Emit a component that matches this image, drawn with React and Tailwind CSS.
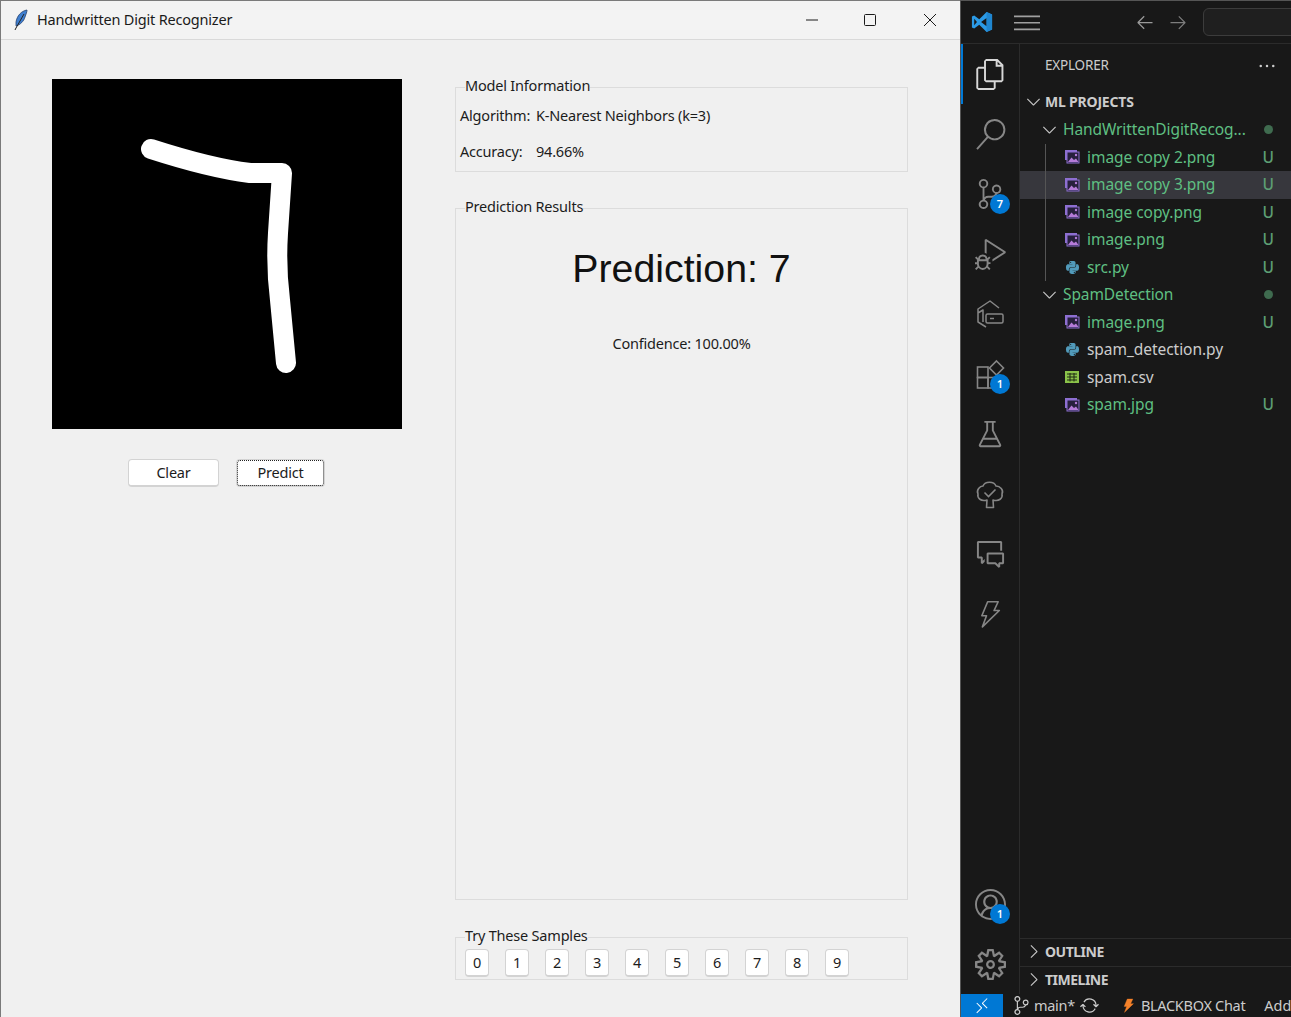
import {
  VscFiles,
  VscSearch,
  VscSourceControl,
  VscDebugAlt,
  VscBeaker,
  VscCommentDiscussion,
  VscAccount,
  VscSettingsGear,
  VscChevronDown,
  VscChevronRight,
  VscEllipsis,
  VscMenu,
  VscArrowLeft,
  VscArrowRight,
  VscRemote,
  VscSourceControl as VscBranch,
  VscSync,
} from "react-icons/vsc";
import { FaPython } from "react-icons/fa";

const uiFont = "font-['Noto_Sans','Open_Sans',sans-serif]";

function GroupBox({ title, className = "", children }) {
  return (
    <fieldset className={`border border-[#dcdcdc] min-w-0 ${className}`}>
      <legend className="ml-[9px] h-5 text-[14.5px] leading-5 text-[#1c1c1c] tracking-[-0.2px]">
        <span className="block -translate-y-[2px]">{title}</span>
      </legend>
      {children}
    </fieldset>
  );
}

function TkButton({ focused, className = "", children }) {
  return (
    <button
      className={`bg-white rounded-[4px] border border-[#d3d3d3] border-b-2 text-[#1c1c1c] text-[14.5px] tracking-[-0.2px] ${
        focused ? "outline-1 outline-dotted outline-[#222] -outline-offset-2" : ""
      } ${className}`}
    >
      {children}
    </button>
  );
}

function Feather() {
  return (
    <svg width="16" height="22" viewBox="0 0 16 22">
      <path d="M14 1 C8 2 4 7 3 13 L3 17 C7 16 11 12 12 8 C13 5 14 3 14 1Z" fill="#3f7fd0" stroke="#24406e" strokeWidth="0.8" />
      <path d="M11 5 L3 19 L2 21" fill="none" stroke="#222" strokeWidth="1" />
    </svg>
  );
}

function TkWindow() {
  const digits = ["0", "1", "2", "3", "4", "5", "6", "7", "8", "9"];
  return (
    <div className={`w-[960px] h-full flex flex-col bg-[#f0f0f0] border-l border-t border-[#7a7a7a] ${uiFont}`}>
      {/* title bar */}
      <div className="h-[39px] shrink-0 flex items-center bg-[#f3f3f3] border-b border-[#d9d9d9] pl-3">
        <Feather />
        <span className="ml-[8px] text-[14.5px] text-[#1a1a1a] tracking-[-0.2px]">Handwritten Digit Recognizer</span>
        <div className="ml-auto flex h-full">
          <div className="w-[58px] flex items-center justify-center">
            <svg width="14" height="14" viewBox="0 0 14 14"><path d="M1 7h12" stroke="#1a1a1a" strokeWidth="1" /></svg>
          </div>
          <div className="w-[58px] flex items-center justify-center">
            <svg width="14" height="14" viewBox="0 0 14 14"><rect x="1.5" y="1.5" width="11" height="11" rx="1" fill="none" stroke="#1a1a1a" strokeWidth="1" /></svg>
          </div>
          <div className="w-[61px] flex items-center justify-center">
            <svg width="14" height="14" viewBox="0 0 14 14"><path d="M1 1l12 12M13 1L1 13" stroke="#1a1a1a" strokeWidth="1" /></svg>
          </div>
        </div>
      </div>

      <div className="flex-1 flex min-h-0">
        {/* canvas column */}
        <div className="w-[454px] shrink-0 pl-[51px] pt-[39px]">
          <div className="w-[350px] h-[350px] bg-black">
            <svg width="350" height="350" viewBox="0 0 350 350">
              <path
                d="M99 70 C130 80 165 90 198 94 L230 94 L226 154 C224 185 226 205 228 221 L234 284"
                fill="none"
                stroke="#fff"
                strokeWidth="20"
                strokeLinecap="round"
                strokeLinejoin="round"
              />
            </svg>
          </div>
          <div className="mt-[30px] w-[350px] pr-px flex justify-center gap-[17px]">
            <TkButton className="w-[91px] h-[28px]">Clear</TkButton>
            <TkButton focused className="w-[89px] h-[28px]">Predict</TkButton>
          </div>
        </div>

        {/* info column */}
        <div className="w-[453px] shrink-0 flex flex-col pt-[37px] pb-[37px]">
          <GroupBox title="Model Information">
            <div className="grid grid-cols-[76px_1fr] auto-rows-[36px] items-center pl-1 pt-px pb-px text-[14.5px] text-[#1c1c1c] tracking-[-0.2px]">
              <span>Algorithm:</span>
              <span>K-Nearest Neighbors (k=3)</span>
              <span>Accuracy:</span>
              <span>94.66%</span>
            </div>
          </GroupBox>

          <GroupBox title="Prediction Results" className="flex-1 mt-[26px]">
            <div className="text-center">
              <h1 className="mt-[26px] font-['Liberation_Sans',Arial,sans-serif] text-[39.3px] leading-[48px] text-[#111]">Prediction: 7</h1>
              <p className="mt-[41px] text-[14.5px] leading-5 text-[#1c1c1c] tracking-[-0.2px]">Confidence: 100.00%</p>
            </div>
          </GroupBox>

          <GroupBox title="Try These Samples" className="mt-[27px]">
            <div className="flex gap-4 pl-[9px] pt-[2px] pb-[2px]">
              {digits.map((d) => (
                <TkButton key={d} className="w-6 h-7">{d}</TkButton>
              ))}
            </div>
          </GroupBox>
        </div>
      </div>
    </div>
  );
}

function VscodeLogo() {
  return (
    <svg width="22" height="22" viewBox="0 0 24 24" className="shrink-0">
      <path d="M17 1 L9 9 L3.5 4.8 L1 6 V18 L3.5 19.2 L9 15 L17 23 L23 20.2 V3.8Z M17 7.5 V16.5 L11 12Z M3.5 8.5 L6.5 12 L3.5 15.5Z" fill="#2b9ae6" fillRule="evenodd" />
      <path d="M17 1 L23 3.8 V20.2 L17 23 V16.5 V7.5Z" fill="#1f86d0" />
    </svg>
  );
}

function ImageIcon() {
  return (
    <svg width="16" height="16" viewBox="0 0 16 16">
      <path d="M1 1h12v2H3v8H1z" fill="#8d6fd1" />
      <rect x="3" y="3" width="12" height="11" fill="#27203d" stroke="#8d6fd1" strokeWidth="1" />
      <path d="M4 13l3.5-4.5 2.5 2.5 2-1.5 2.5 3.5z" fill="#b57bd8" />
      <circle cx="12" cy="6" r="1.2" fill="#b57bd8" />
    </svg>
  );
}

function CsvIcon() {
  return (
    <svg width="16" height="16" viewBox="0 0 16 16">
      <rect x="1" y="2" width="14" height="12" fill="#8bc34a" />
      <path d="M3 5h10M3 8h10M3 11h10M6 4v8.5M10 4v8.5" stroke="#1e2b12" strokeWidth="1" />
    </svg>
  );
}

function RemoteIcon({ size }) {
  return (
    <svg width={size} height={size} viewBox="0 0 30 30" fill="none" stroke="#868686" strokeWidth="1.5">
      <path d="M11 28 L3 23 V10 L15 2 L24 9 M3 14 L8 11 V23" strokeLinejoin="round" />
      <rect x="11" y="15" width="17" height="9" rx="1.5" />
      <path d="M15 19.5h4" />
    </svg>
  );
}

function ExtensionsIcon({ size }) {
  return (
    <svg width={size} height={size} viewBox="0 0 30 30" fill="none" stroke="#868686" strokeWidth="1.6">
      <rect x="2.5" y="8" width="10.5" height="10.5" />
      <rect x="2.5" y="18.5" width="10.5" height="10.5" />
      <rect x="13" y="18.5" width="10.5" height="10.5" />
      <path d="M21.5 2 L28.5 9 L21.5 16 L14.5 9Z" />
    </svg>
  );
}

function TreeCheckIcon({ size }) {
  return (
    <svg width={size} height={size} viewBox="0 0 30 30" fill="none" stroke="#868686" strokeWidth="1.6">
      <path d="M12 21 C6 23 2 19 3 15 C1 11 5 7 8 7 C10 2 19 2 21 7 C25 7 29 11 27 15 C28 19 24 23 18 21 L18.5 28.5 H11.5 Z" strokeLinejoin="round" />
      <path d="M9.5 13.5 L13.5 17.5 L20.5 10.5" />
    </svg>
  );
}

function BoltIcon({ size, className = "", color = "#868686", filled, strokeWidth = 1.4 }) {
  return (
    <svg width={size} height={size} viewBox="0 0 24 24" className={`shrink-0 ${className}`} fill={filled ? color : "none"} stroke={color} strokeWidth={strokeWidth}>
      <path d="M10 1.5 H19 L15.5 9 H20 L5.5 23 L9 13.5 H5 Z" strokeLinejoin="round" />
    </svg>
  );
}

function Badge({ n }) {
  return (
    <span className="absolute right-[9px] bottom-[10px] w-5 h-5 rounded-full bg-[#0078d4] text-white text-[11px] font-semibold flex items-center justify-center">
      {n}
    </span>
  );
}

function ActivityItem({ children, badge, active }) {
  return (
    <div className={`relative h-[60px] flex items-center justify-center ${active ? "border-l-2 border-[#0078d4] pr-[2px]" : ""}`}>
      {children}
      {badge && <Badge n={badge} />}
    </div>
  );
}

const files = [
  { name: "HandWrittenDigitRecog...", folder: true, status: "dot" },
  { name: "image copy 2.png", icon: "img", status: "U" },
  { name: "image copy 3.png", icon: "img", status: "U", selected: true },
  { name: "image copy.png", icon: "img", status: "U" },
  { name: "image.png", icon: "img", status: "U" },
  { name: "src.py", icon: "py", status: "U" },
  { name: "SpamDetection", folder: true, status: "dot" },
  { name: "image.png", icon: "img", status: "U" },
  { name: "spam_detection.py", icon: "py", plain: true },
  { name: "spam.csv", icon: "csv", plain: true },
  { name: "spam.jpg", icon: "img", status: "U" },
];

function FileRow({ file, guide }) {
  const color = file.plain ? "text-[#cccccc]" : "text-[#5fbf82]";
  return (
    <div className={`relative h-[27.5px] flex items-center ${file.selected ? "bg-[#37373d]" : ""}`}>
      {guide && <span className="absolute left-[25px] top-0 bottom-0 w-px bg-[#555]" />}
      {file.folder ? (
        <>
          <VscChevronDown size={21} color="#c5c5c5" className="ml-[19px] shrink-0" />
          <span className={`ml-[3px] tracking-[-0.1px] ${color}`}>{file.name}</span>
        </>
      ) : (
        <>
          <span className="ml-[44px] w-4 shrink-0 flex items-center justify-center">
            {file.icon === "img" && <ImageIcon />}
            {file.icon === "py" && <FaPython size={15} color="#519aba" />}
            {file.icon === "csv" && <CsvIcon />}
          </span>
          <span className={`ml-[7px] tracking-[-0.05px] ${color}`}>{file.name}</span>
        </>
      )}
      {file.status === "U" && <span className="ml-auto mr-[17px] text-[#5d9e74] text-[15.5px] font-medium">U</span>}
      {file.status === "dot" && <span className="ml-auto mr-[18px] w-[9px] h-[9px] rounded-full bg-[#3f6b4f]" />}
    </div>
  );
}

function CollapsedSection({ title }) {
  return (
    <div className="h-[28px] flex items-center border-t border-[#2b2b2b] pb-[2px]">
      <VscChevronRight size={21} color="#c5c5c5" className="ml-[3px] shrink-0" />
      <span className="ml-px text-[14px] font-bold text-[#cccccc] tracking-[-0.5px]">{title}</span>
    </div>
  );
}

function VsCode() {
  return (
    <div className={`w-[331px] h-full flex flex-col bg-[#181818] border-l border-[#555] overflow-hidden ${uiFont}`}>
      {/* title bar */}
      <div className="h-[44px] shrink-0 flex items-center border-b border-[#2b2b2b] border-t border-t-[#555]">
        <div className="ml-[10px] shrink-0"><VscodeLogo /></div>
        <VscMenu size={26} color="#a0a0a0" className="ml-[21px] shrink-0" />
        <VscArrowLeft size={20} color="#9a9a9a" className="ml-[95px] shrink-0" />
        <VscArrowRight size={20} color="#7d7d7d" className="ml-[13px] shrink-0" />
        <div className="ml-[15px] w-[120px] h-[28px] shrink-0 rounded-md border border-[#3c3c3c] bg-[#1f1f1f]" />
      </div>

      <div className="flex-1 flex min-h-0">
        {/* activity bar */}
        <div className="w-[59px] shrink-0 flex flex-col border-r border-[#2b2b2b]">
          <ActivityItem active><VscFiles size={31} color="#d7d7d7" /></ActivityItem>
          <ActivityItem><VscSearch size={31} color="#868686" /></ActivityItem>
          <ActivityItem badge="7"><VscSourceControl size={30} color="#868686" /></ActivityItem>
          <ActivityItem><VscDebugAlt size={31} color="#868686" /></ActivityItem>
          <ActivityItem><RemoteIcon size={30} /></ActivityItem>
          <ActivityItem badge="1"><ExtensionsIcon size={30} /></ActivityItem>
          <ActivityItem><VscBeaker size={30} color="#868686" /></ActivityItem>
          <ActivityItem><TreeCheckIcon size={30} /></ActivityItem>
          <ActivityItem><VscCommentDiscussion size={31} color="#868686" /></ActivityItem>
          <ActivityItem><BoltIcon size={28} /></ActivityItem>
          <div className="mt-auto">
            <ActivityItem badge="1"><VscAccount size={31} color="#868686" /></ActivityItem>
            <ActivityItem><VscSettingsGear size={31} color="#868686" /></ActivityItem>
          </div>
        </div>

        {/* explorer */}
        <div className="flex-1 min-w-0 flex flex-col text-[15.5px]">
          <div className="h-[43px] shrink-0 flex items-center pl-[25px] pr-[14px] text-[13.5px] text-[#cccccc] tracking-[-0.2px]">
            EXPLORER
            <VscEllipsis size={20} color="#cccccc" className="ml-auto" />
          </div>
          <div className="h-[28px] shrink-0 flex items-center">
            <VscChevronDown size={21} color="#c5c5c5" className="ml-[3px] shrink-0" />
            <span className="ml-px text-[14px] font-bold text-[#cccccc] tracking-[-0.2px]">ML PROJECTS</span>
          </div>
          <div className="pt-px">
            {files.map((file, i) => (
              <FileRow key={i} file={file} guide={i >= 1 && i <= 5} />
            ))}
          </div>
          <div className="mt-auto">
            <CollapsedSection title="OUTLINE" />
            <CollapsedSection title="TIMELINE" />
          </div>
        </div>
      </div>

      {/* status bar */}
      <div className="h-[23px] shrink-0 flex items-center text-[14.5px] text-[#cccccc] whitespace-nowrap">
        <div className="w-[42px] h-full shrink-0 bg-[#0078d4] flex items-center justify-center">
          <VscRemote size={18} color="#fff" />
        </div>
        <VscBranch size={19} color="#cccccc" className="ml-[9px] shrink-0" />
        <span className="ml-[3px] tracking-[-0.3px]">main*</span>
        <VscSync size={19} color="#cccccc" className="ml-[5px] shrink-0" />
        <BoltIcon size={15} color="#f5822a" filled strokeWidth={0.5} className="ml-[22px]" />
        <span className="ml-[5px] tracking-[-0.3px]">BLACKBOX Chat</span>
        <span className="ml-[19px]">Add</span>
      </div>
    </div>
  );
}

export default function App() {
  return (
    <div className="w-[1291px] h-[1017px] flex overflow-hidden">
      <TkWindow />
      <VsCode />
    </div>
  );
}
